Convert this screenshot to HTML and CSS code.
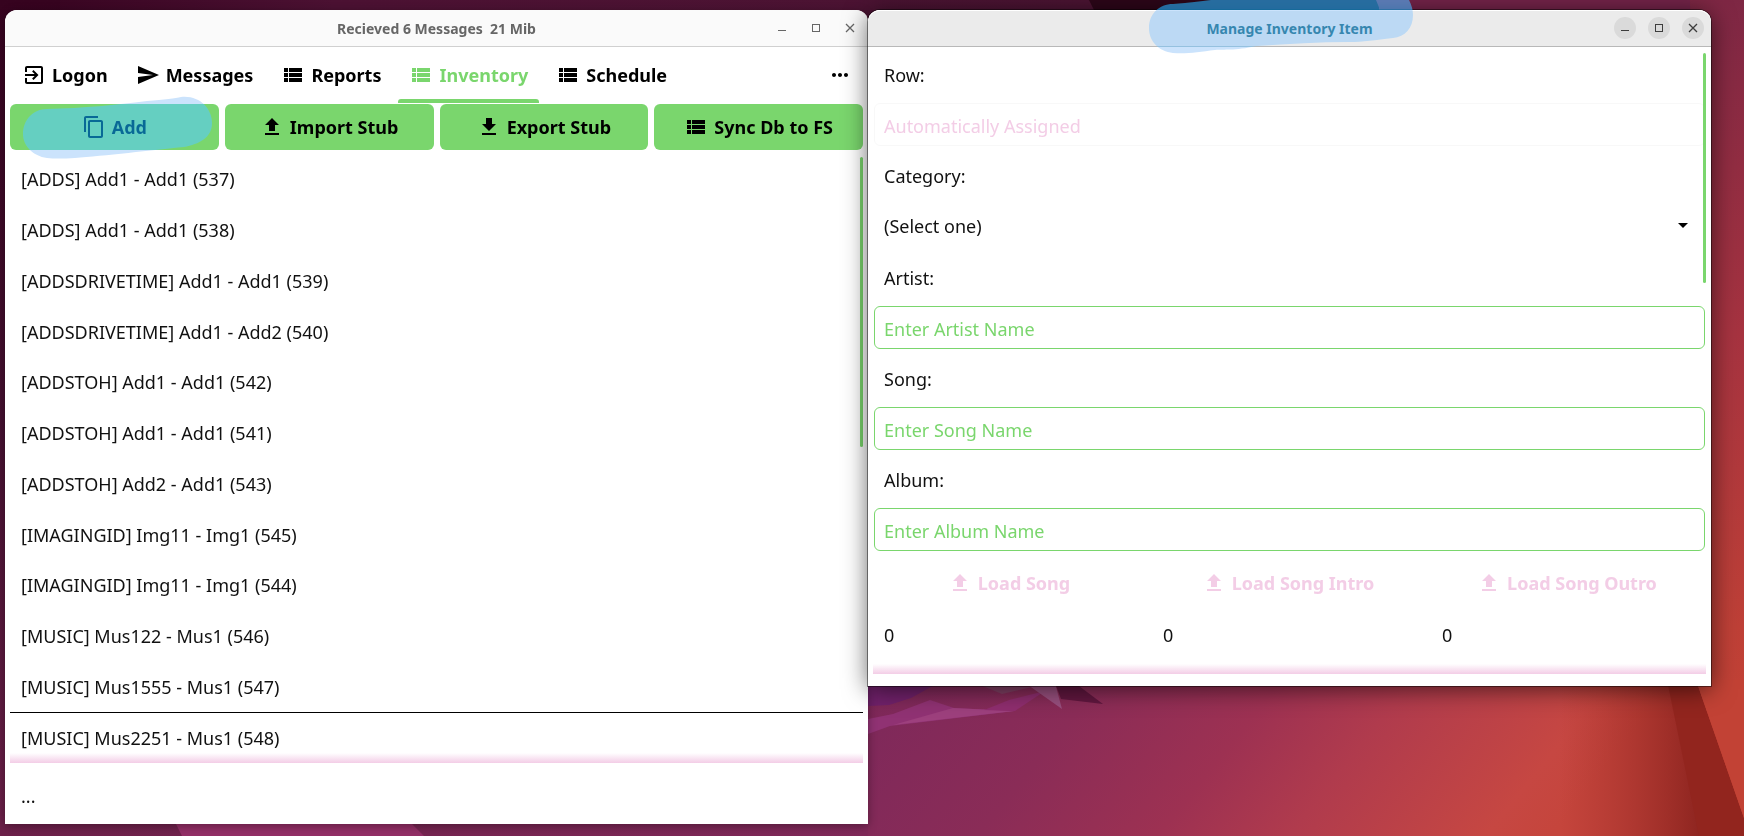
FILE: index.html
```html
<!DOCTYPE html>
<html lang="en">
<head>
<meta charset="utf-8">
<title>Inventory</title>
<link rel="stylesheet" href="styles.css">
</head>
<body>
<svg width="0" height="0" class="defs" aria-hidden="true">
  <symbol id="i-logon" viewBox="0 0 24 24"><path d="M10.09 15.59 11.5 17l5-5-5-5-1.41 1.41L12.67 11H3v2h9.67l-2.58 2.59zM19 3H5c-1.11 0-2 .9-2 2v4h2V5h14v14H5v-4H3v4c0 1.1.89 2 2 2h14c1.1 0 2-.9 2-2V5c0-1.1-.9-2-2-2z"/></symbol>
  <symbol id="i-send" viewBox="0 0 24 24"><path d="M2.01 21 23 12 2.01 3 2 10l15 2-15 2z"/></symbol>
  <symbol id="i-list" viewBox="0 0 24 24"><path d="M3 14h4v-4H3v4zm0 5h4v-4H3v4zM3 9h4V5H3v4zm5 5h13v-4H8v4zm0 5h13v-4H8v4zM8 5v4h13V5H8z"/></symbol>
  <symbol id="i-copy" viewBox="0 0 24 24"><path d="M16 1H4c-1.1 0-2 .9-2 2v14h2V3h12V1zm3 4H8c-1.1 0-2 .9-2 2v14c0 1.1.9 2 2 2h11c1.1 0 2-.9 2-2V7c0-1.100-.9-2-2-2zm0 16H8V7h11v14z"/></symbol>
  <symbol id="i-up" viewBox="0 0 24 24"><path d="M9 16h6v-6h4l-7-7-7 7h4zM5 18h14v2H5z"/></symbol>
  <symbol id="i-down" viewBox="0 0 24 24"><path d="M19 9h-4V3H9v6H5l7 7 7-7zM5 18v2h14v-2H5z"/></symbol>
  <symbol id="i-more" viewBox="0 0 24 24"><path d="M6 10c-1.100 0-2 .9-2 2s.9 2 2 2 2-.9 2-2-.9-2-2-2zm12 0c-1.100 0-2 .9-2 2s.9 2 2 2 2-.9 2-2-.9-2-2-2zm-6 0c-1.100 0-2 .9-2 2s.9 2 2 2 2-.9 2-2-.9-2-2-2z"/></symbol>
  <symbol id="i-min" viewBox="0 0 16 16"><path d="M4 10h8v1H4z"/></symbol>
  <symbol id="i-max" viewBox="0 0 16 16"><path d="M4 4h8v8H4zm1 1v6h6V5z" fill-rule="evenodd"/></symbol>
  <symbol id="i-close" viewBox="0 0 16 16"><path d="M4 4l8 8M12 4l-8 8" fill="none" stroke="currentColor" stroke-width="1.300"/></symbol>
  <symbol id="m-add" viewBox="0 0 190 64"><path d="M24 13C62 12 92 9 124 5Q150 3 158 1C176-1 189 12 189 27C189 42 176 48 161 51C130 54 80 60 52 62Q34 63 24 62C10 60 0 50 0 38C0 24 10 13 24 13Z"/></symbol>
  <symbol id="m-title" viewBox="0 0 264 54"><path d="M24 4L36 3C46 2 54 1 62 0H260Q264 8 264 15C264 28 256 37 244 38C226 40 214 42 200 42C170 42 140 44 108 46C84 51 76 49 66 50C50 52 38 54 24 53C10 51 0 42 0 28C0 14 10 4 24 4Z"/></symbol>
</svg>

<svg class="wallpaper" viewBox="0 0 1744 836" preserveAspectRatio="none" aria-hidden="true">
  <defs>
    <linearGradient id="bg" gradientUnits="userSpaceOnUse" x1="500" y1="100" x2="1500" y2="900">
      <stop offset="0" stop-color="#4a1232"/><stop offset=".54" stop-color="#80295a"/><stop offset=".65" stop-color="#8a2c57"/><stop offset=".76" stop-color="#9d3152"/><stop offset=".84" stop-color="#b03b4d"/><stop offset=".96" stop-color="#c64742"/><stop offset="1" stop-color="#c5453c"/>
    </linearGradient>
    <linearGradient id="top" x1="0" x2="1" y1="0" y2="0">
      <stop offset="0" stop-color="#36031f"/><stop offset=".3" stop-color="#4b1132"/><stop offset="1" stop-color="#4c1433"/>
    </linearGradient>
    <linearGradient id="left" x1="0" x2="0" y1="0" y2="1">
      <stop offset="0" stop-color="#36031f"/><stop offset=".5" stop-color="#451030"/><stop offset="1" stop-color="#6c2049"/>
    </linearGradient>
    <linearGradient id="bottom" x1="0" x2="1" y1="0" y2="0">
      <stop offset="0" stop-color="#6c2049"/><stop offset="1" stop-color="#802959"/>
    </linearGradient>
    <linearGradient id="right" x1="0" x2="0" y1="0" y2="1">
      <stop offset="0" stop-color="#7e2744"/><stop offset=".4" stop-color="#a63340"/><stop offset=".75" stop-color="#be4037"/><stop offset="1" stop-color="#c94534"/>
    </linearGradient>
    <linearGradient id="fold" x1="0" x2="1" y1="0" y2="0">
      <stop offset="0" stop-color="#a6302b" stop-opacity="0"/><stop offset="1" stop-color="#8c241f"/>
    </linearGradient>
  </defs>
  <rect width="1744" height="836" fill="url(#bg)"/>
  <rect width="1110" height="60" fill="url(#top)"/>
  <path d="M1089 0h290v60h-260z" fill="#2d0619"/>
  <path d="M1376 0h370v60h-346z" fill="#75244a"/>
  <rect width="60" height="836" fill="url(#left)"/>
  <path d="M0 816h868v20H0z" fill="url(#bottom)"/>
  <path d="M172 816h232l20 20H182z" fill="#932f66"/>
  <path d="M1690 0h54v836h-34z" fill="url(#right)"/>
  <path d="M1560 680h112l32 156h-144z" fill="url(#fold)"/>
  <path d="M1667 680h29l48 138v18h-45z" fill="#92251e"/>
  <path d="M1696 680h48v138z" fill="#c24235"/>
  <path d="M868 683h70l-27 15-22 7-21 1z" fill="#70216a"/>
  <path d="M868 719l25-5 37-14 24 8 61 3-125 15-22 8z" fill="#903273"/>
  <path d="M893 725l60-17 61 3z" fill="#9d407d"/>
  <path d="M984 710l25-10 36-9-30 20z" fill="#8f2e6f"/>
  <path d="M980 685l22 9 30-7z" fill="#814064"/>
  <path d="M1028 685l34 24-7-26z" fill="#99507f"/>
  <path d="M1055 683h20l28 21-42-5z" fill="#61173f"/>
</svg>

<main class="desktop">
  <section class="window main-window">
    <header class="titlebar">
      <h1 class="title">Recieved 6 Messages&nbsp; 21 Mib</h1>
      <div class="controls">
        <button class="control" aria-label="Minimize"><svg><use href="#i-min"/></svg></button>
        <button class="control" aria-label="Maximize"><svg><use href="#i-max"/></svg></button>
        <button class="control" aria-label="Close"><svg><use href="#i-close"/></svg></button>
      </div>
    </header>
    <div class="content">
      <nav class="tabs">
        <button class="tab"><svg class="icon"><use href="#i-logon"/></svg>Logon</button>
        <button class="tab"><svg class="icon"><use href="#i-send"/></svg>Messages</button>
        <button class="tab"><svg class="icon"><use href="#i-list"/></svg>Reports</button>
        <button class="tab selected"><svg class="icon"><use href="#i-list"/></svg>Inventory</button>
        <button class="tab"><svg class="icon"><use href="#i-list"/></svg>Schedule</button>
        <button class="tab more" aria-label="More"><svg class="icon"><use href="#i-more"/></svg></button>
      </nav>
      <div class="actions">
        <button class="action"><svg class="icon"><use href="#i-copy"/></svg>Add
          <svg class="marker marker-add tint" aria-hidden="true"><use href="#m-add"/></svg>
          <svg class="marker marker-add shade" aria-hidden="true"><use href="#m-add"/></svg>
        </button>
        <button class="action"><svg class="icon"><use href="#i-up"/></svg>Import Stub</button>
        <button class="action"><svg class="icon"><use href="#i-down"/></svg>Export Stub</button>
        <button class="action"><svg class="icon"><use href="#i-list"/></svg>Sync Db to FS</button>
      </div>
      <div class="scroll">
        <ul class="list">
          <li class="item">[ADDS] Add1 - Add1 (537)</li>
          <li class="item">[ADDS] Add1 - Add1 (538)</li>
          <li class="item">[ADDSDRIVETIME] Add1 - Add1 (539)</li>
          <li class="item">[ADDSDRIVETIME] Add1 - Add2 (540)</li>
          <li class="item">[ADDSTOH] Add1 - Add1 (542)</li>
          <li class="item">[ADDSTOH] Add1 - Add1 (541)</li>
          <li class="item">[ADDSTOH] Add2 - Add1 (543)</li>
          <li class="item">[IMAGINGID] Img11 - Img1 (545)</li>
          <li class="item">[IMAGINGID] Img11 - Img1 (544)</li>
          <li class="item">[MUSIC] Mus122 - Mus1 (546)</li>
          <li class="item">[MUSIC] Mus1555 - Mus1 (547)</li>
          <li class="item ruled">[MUSIC] Mus2251 - Mus1 (548)</li>
        </ul>
        <span class="thumb list-thumb"></span>
      </div>
      <p class="status">...</p>
    </div>
  </section>

  <section class="window dialog">
    <header class="titlebar active">
      <h2 class="title">Manage Inventory Item</h2>
      <div class="controls">
        <button class="control" aria-label="Minimize"><svg><use href="#i-min"/></svg></button>
        <button class="control" aria-label="Maximize"><svg><use href="#i-max"/></svg></button>
        <button class="control" aria-label="Close"><svg><use href="#i-close"/></svg></button>
      </div>
    </header>
    <svg class="marker marker-title tint" aria-hidden="true"><use href="#m-title"/></svg>
    <svg class="marker marker-title shade" aria-hidden="true"><use href="#m-title"/></svg>
    <form class="form">
      <label class="label" for="row">Row:</label>
      <input class="field" id="row" placeholder="Automatically Assigned" disabled>
      <label class="label" for="category">Category:</label>
      <div class="picker">
        <select class="select" id="category"><option>(Select one)</option></select>
        <svg class="caret" viewBox="0 0 10 5" aria-hidden="true"><path d="M0 0h10L5 5z"/></svg>
      </div>
      <label class="label" for="artist">Artist:</label>
      <input class="field" id="artist" placeholder="Enter Artist Name">
      <label class="label" for="song">Song:</label>
      <input class="field" id="song" placeholder="Enter Song Name">
      <label class="label" for="album">Album:</label>
      <input class="field" id="album" placeholder="Enter Album Name">
      <div class="loads">
        <button class="load" type="button" disabled><svg class="icon"><use href="#i-up"/></svg>Load Song</button>
        <button class="load" type="button" disabled><svg class="icon"><use href="#i-up"/></svg>Load Song Intro</button>
        <button class="load" type="button" disabled><svg class="icon"><use href="#i-up"/></svg>Load Song Outro</button>
      </div>
      <div class="counts"><output>0</output><output>0</output><output>0</output></div>
      <span class="thumb form-thumb"></span>
    </form>
  </section>
</main>
</body>
</html>
```
FILE: styles.css
```css
* { box-sizing: border-box; }
html, body { height: 100%; }
body {
  margin: 0;
  overflow: hidden;
  background: #4a1232;
  color: #111;
  font: 18px/24px "Noto Sans", sans-serif;
}
button, input, select { font: inherit; color: inherit; margin: 0; }
button { border: 0; background: none; padding: 0; }
svg { fill: currentColor; }
.defs { position: absolute; }
.wallpaper { position: absolute; inset: 0; width: 100%; height: 100%; }

.desktop {
  position: relative;
  display: grid;
  grid-template-columns: 863fr 843fr;
  height: 100%;
  padding: 10px 33px 12px 5px;
}
.window {
  position: relative;
  display: flex;
  flex-direction: column;
  background: #fff;
  border-radius: 12px 12px 0 0;
  box-shadow: 0 2px 10px rgba(0, 0, 0, .35);
}
.dialog {
  align-self: start;
  box-shadow: 0 0 0 1px rgba(0, 0, 0, .45), 0 3px 24px rgba(0, 0, 0, .6);
}
.titlebar {
  display: grid;
  grid-template-columns: 1fr auto 1fr;
  align-items: center;
  flex: none;
  height: 37px;
  padding: 0 7px;
  border-bottom: 1px solid #d0d0d0;
  border-radius: 12px 12px 0 0;
  background: #fafafa;
  color: #666;
}
.titlebar.active { background: #ebebeb; border-color: #b8b8b8; color: #3d3d3d; box-shadow: inset 0 1px #fff; }
.title { grid-column: 2; margin: 0; padding-top: 2px; font: bold 14px/20px "Noto Sans", sans-serif; }
.controls { display: flex; justify-content: flex-end; gap: 12px; }
.control { display: grid; place-items: center; width: 22px; height: 22px; border-radius: 50%; }
.control svg { width: 16px; height: 16px; }
.active .control { background: #dadada; }

.content { display: flex; flex-direction: column; flex: 1; padding: 0 5px; min-height: 0; }
.tabs { display: flex; gap: 6px; height: 56px; padding-left: 1px; }
.tab {
  display: flex;
  align-items: center;
  gap: 6px;
  padding: 0 11px;
  color: #000;
  font-weight: bold;
  border-bottom: 4px solid transparent;
  border-top: 4px solid transparent;
}
.selected { color: #7ad66d; position: relative; }
.selected::after { content: ""; position: absolute; inset: auto 0 -4px; height: 4px; border-radius: 3px 3px 0 0; background: #7ad66d; }
.more { margin-left: auto; }
.icon { width: 24px; height: 24px; flex: none; }
.actions { display: grid; grid-template-columns: repeat(4, 1fr); gap: 6px; }
.action {
  position: relative;
  display: flex;
  align-items: center;
  justify-content: center;
  gap: 6px;
  height: 46px;
  margin-top: 1px;
  border-radius: 6px;
  background: #7ad66d;
  color: #000;
  font-weight: bold;
}
/* Highlighter strokes: the tint lifts dark ink to blue, the shade colours the paper. */
.marker { position: absolute; pointer-events: none; }
.tint { fill: #0a7698; mix-blend-mode: screen; }
.shade { fill: #cbe3fc; mix-blend-mode: multiply; }
.marker-add { left: 13px; top: -8px; width: 190px; height: 64px; }
.marker-title { left: 33.333%; top: -10px; width: 264px; height: 54px; }
.scroll { position: relative; flex: 1; display: flex; margin-top: 4px; }
.scroll::after, .form::after {
  content: "";
  position: absolute;
  inset: auto 0 0;
  height: 10px;
  background: linear-gradient(rgba(243, 205, 230, 0), #f3cde6);
}
.list { display: grid; grid-auto-rows: 1fr; flex: 1; margin: 0; padding: 0; list-style: none; }
.item { display: flex; align-items: center; padding: 0 11px; }
.ruled { border-top: 1px solid #000; }
.thumb { position: absolute; width: 3px; border-radius: 2px; background: #7ad66d; }
.list-thumb { right: 0; top: 3px; height: 290px; }
.status { margin: 0; padding: 21px 11px 16px; }

.form {
  position: relative;
  display: flex;
  flex-direction: column;
  margin: 6px 5px 12px;
  padding-bottom: 27px;
}
.label { padding: 10px 11px 16px; }
.field {
  height: 43px;
  margin: 0 1px 8px;
  padding: 3px 9px 0;
  border: 1px solid #7ad66d;
  border-radius: 6px;
  background: #fff;
}
.field::placeholder { color: #7ad66d; opacity: 1; }
.field:disabled { border-color: #f8f8f8; }
.field:disabled::placeholder { color: #f3cde6; }
.picker { display: grid; align-items: center; margin: 0 1px 9px; }
.select, .caret { grid-area: 1 / 1; }
.select {
  appearance: none;
  height: 43px;
  padding: 1px 10px 0;
  border: 0;
  background: #fff;
}
.caret { justify-self: end; width: 10px; height: 5px; margin-right: 17px; color: #000; pointer-events: none; }
.loads, .counts { display: grid; grid-template-columns: repeat(3, 1fr); gap: 4px; }
.loads { padding-top: 1px; }
.load { display: flex; align-items: center; justify-content: center; gap: 6px; height: 46px; padding-right: 3px; color: #f3cde6; font-weight: bold; }
.counts { padding-top: 17px; }
.counts output { padding: 0 11px; }
.form-thumb { right: 0; top: 0; height: 230px; }
```
